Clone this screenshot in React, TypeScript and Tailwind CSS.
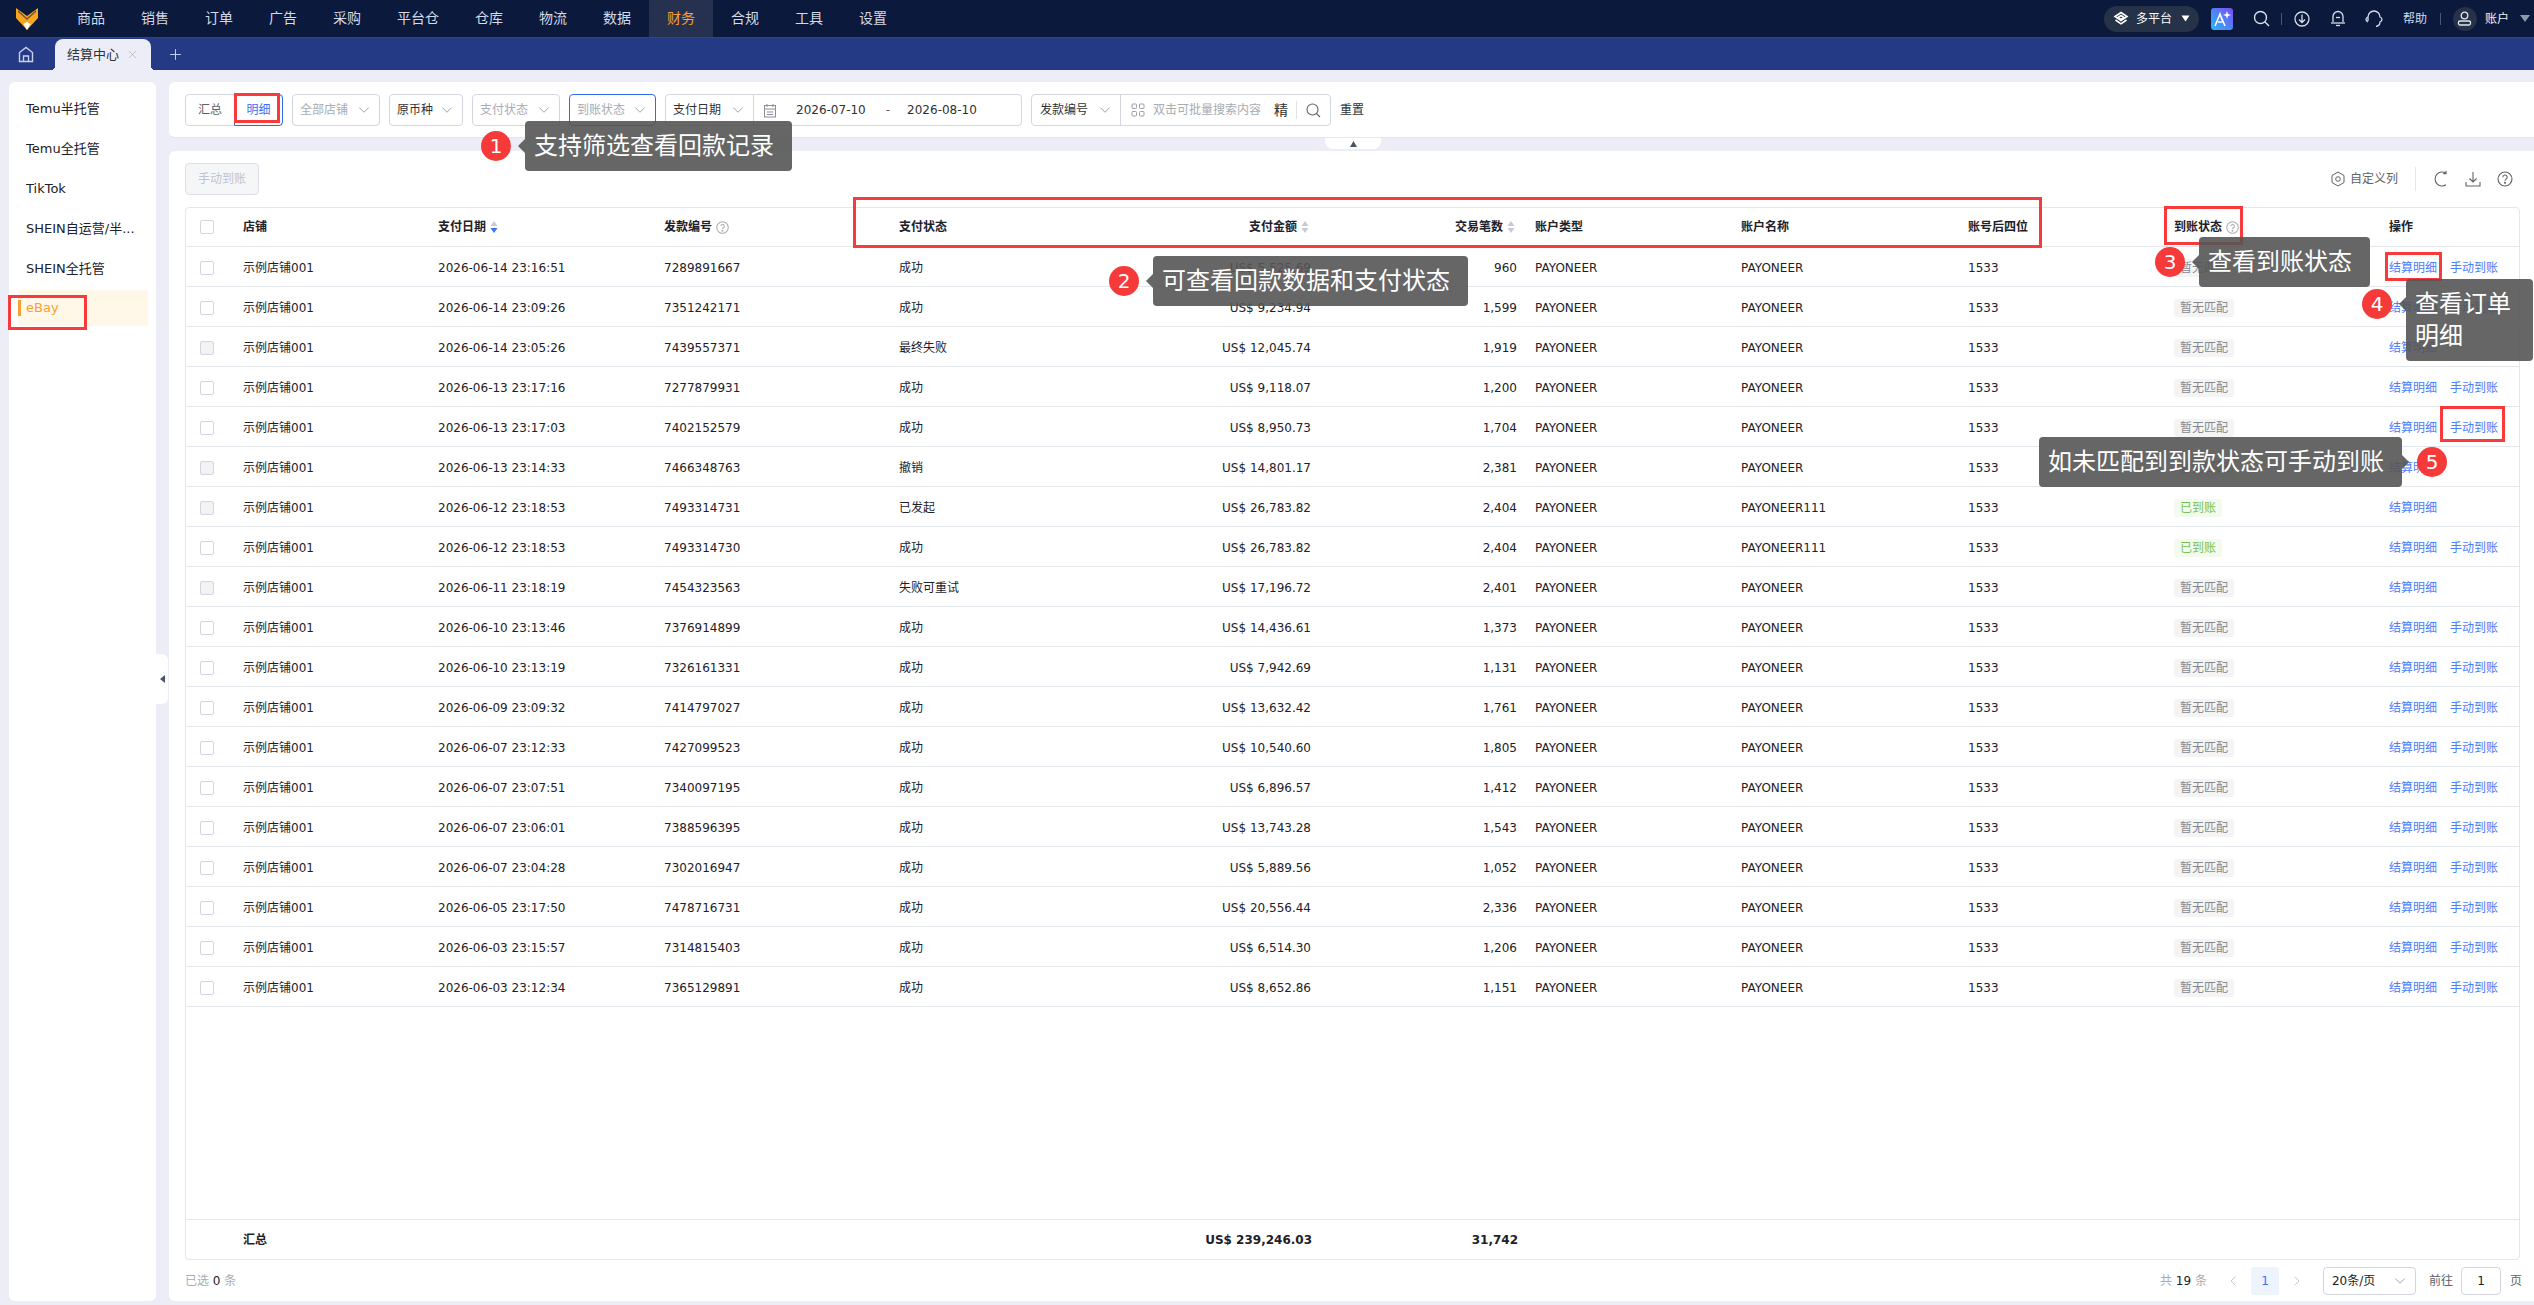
import React from "react";
import { ChevronDown, ChevronLeft, ChevronRight, X, Plus } from "lucide-react";

const NAV = ["商品", "销售", "订单", "广告", "采购", "平台仓", "仓库", "物流", "数据", "财务", "合规", "工具", "设置"];
const SIDE = ["Temu半托管", "Temu全托管", "TikTok", "SHEIN自运营/半...", "SHEIN全托管"];

const ROWS: [string, string, string, string, string, boolean, boolean][] = [
  ["2026-06-14 23:16:51", "7289891667", "成功", "5,525.69", "960", false, true],
  ["2026-06-14 23:09:26", "7351242171", "成功", "9,234.94", "1,599", false, true],
  ["2026-06-14 23:05:26", "7439557371", "最终失败", "12,045.74", "1,919", false, false],
  ["2026-06-13 23:17:16", "7277879931", "成功", "9,118.07", "1,200", false, true],
  ["2026-06-13 23:17:03", "7402152579", "成功", "8,950.73", "1,704", false, true],
  ["2026-06-13 23:14:33", "7466348763", "撤销", "14,801.17", "2,381", false, false],
  ["2026-06-12 23:18:53", "7493314731", "已发起", "26,783.82", "2,404", true, false],
  ["2026-06-12 23:18:53", "7493314730", "成功", "26,783.82", "2,404", true, true],
  ["2026-06-11 23:18:19", "7454323563", "失败可重试", "17,196.72", "2,401", false, false],
  ["2026-06-10 23:13:46", "7376914899", "成功", "14,436.61", "1,373", false, true],
  ["2026-06-10 23:13:19", "7326161331", "成功", "7,942.69", "1,131", false, true],
  ["2026-06-09 23:09:32", "7414797027", "成功", "13,632.42", "1,761", false, true],
  ["2026-06-07 23:12:33", "7427099523", "成功", "10,540.60", "1,805", false, true],
  ["2026-06-07 23:07:51", "7340097195", "成功", "6,896.57", "1,412", false, true],
  ["2026-06-07 23:06:01", "7388596395", "成功", "13,743.28", "1,543", false, true],
  ["2026-06-07 23:04:28", "7302016947", "成功", "5,889.56", "1,052", false, true],
  ["2026-06-05 23:17:50", "7478716731", "成功", "20,556.44", "2,336", false, true],
  ["2026-06-03 23:15:57", "7314815403", "成功", "6,514.30", "1,206", false, true],
  ["2026-06-03 23:12:34", "7365129891", "成功", "8,652.86", "1,151", false, true],
];

const GRID = "grid grid-cols-[45px_195px_226px_235px_213px_217px_206px_206px_227px_206px_215px_1fr] items-center";

function Sort({ active }: { active?: boolean }) {
  return (
    <svg width="8" height="14" viewBox="0 0 8 14" className="ml-[4px] shrink-0">
      <path d="M4 1 L7.5 6 H0.5 Z" fill="#c5cad6" />
      <path d="M4 13 L7.5 8 H0.5 Z" fill={active ? "#3b71f6" : "#c5cad6"} />
    </svg>
  );
}

function Help() {
  return (
    <svg width="13" height="13" viewBox="0 0 14 14" fill="none" stroke="#a8abb2" strokeWidth="1.1" className="ml-[4px] shrink-0">
      <circle cx="7" cy="7" r="6.2" />
      <path d="M5.2 5.5a1.9 1.9 0 1 1 2.8 1.7c-.7.4-1 .8-1 1.5" />
      <circle cx="7" cy="10.4" r=".5" fill="#a8abb2" />
    </svg>
  );
}

function Check({ disabled }: { disabled?: boolean }) {
  return (
    <div className="flex justify-center pr-[3px]">
      <div className={disabled ? "h-[14px] w-[14px] rounded-[2px] border border-[#d3d6de] bg-[#f2f3f5]" : "h-[14px] w-[14px] rounded-[2px] border border-[#d3d6de] bg-white"} />
    </div>
  );
}

function Select({ label, w, placeholder, active }: { label: string; w: string; placeholder?: boolean; active?: boolean }) {
  return (
    <div className={`${w} ${active ? "border-[#2f6bf0]" : "border-[#d3d6de]"} flex h-[32px] items-center justify-between rounded-[4px] border pl-[7px] pr-[6px]`}>
      <span className={placeholder ? "text-[#a8abb2]" : "text-[#303133]"}>{label}</span>
      <ChevronDown size={18} strokeWidth={1} color="#7f848e" />
    </div>
  );
}

function Callout({ n, box, circle, arrow, children }: { n: number; box: string; circle: string; arrow: string; children: React.ReactNode }) {
  return (
    <>
      <div className={`absolute z-20 flex items-center rounded-[4px] bg-[#555555]/90 px-[9px] text-[24px] leading-[32px] text-white ${box}`}>{children}</div>
      <div className={`absolute z-20 h-0 w-0 border-y-[7px] border-y-transparent ${arrow}`} />
      <div className={`absolute z-20 flex h-[30px] w-[30px] items-center justify-center rounded-full bg-[#f63a3a] text-[20px] text-white ${circle}`}>{n}</div>
    </>
  );
}

const RED = "absolute z-10 border-[3px] border-[#f83a3a] pointer-events-none";

export default function App() {
  return (
    <div className="relative flex h-[1305px] w-[2534px] flex-col overflow-hidden bg-[#ecedf6] text-[12px] text-[#1d2129] [font-family:'DejaVu_Sans','Noto_Sans_CJK_SC',sans-serif]">
      {/* top bar */}
      <header className="flex h-[37px] shrink-0 items-stretch bg-[#0b193c] text-[14px] text-[#d3d9e6]">
        <div className="flex w-[59px] items-center pl-[16px]">
          <svg width="22" height="22" viewBox="0 0 22 22">
            <path d="M0 0 L11 8 L22 0 V10 L11 22 L0 10 Z" fill="#f9a51f" />
            <path d="M2 2 L11 10 L20 2 L20 4 L11 12 L2 4 Z" fill="#0b193c" opacity=".55" />
            <path d="M7.5 16 L11 14 L14.5 16 L11 22 Z" fill="#ffffff" />
          </svg>
        </div>
        <nav className="flex items-stretch">
          {NAV.map((n) => (
            <div key={n} className={n === "财务" ? "flex items-center bg-[#263150] px-[18px] text-[#f5a032]" : "flex items-center px-[18px]"}>{n}</div>
          ))}
        </nav>
        <div className="ml-auto flex items-center text-[12px]">
          <div className="flex h-[26px] w-[95px] items-center rounded-full bg-[#263247] pl-[9px] text-white">
            <svg width="16" height="16" viewBox="0 0 16 16" fill="none" stroke="#fff" strokeWidth="1.6"><path d="M8 1.5 14 5.5 8 9.5 2 5.5Z" /><path d="M2.5 9 8 12.8 13.5 9" /><path d="M5 6.5 8 4.5 11 6.5 8 8.5Z" /></svg>
            <span className="ml-[7px]">多平台</span>
            <svg width="9" height="7" viewBox="0 0 9 7" className="ml-[9px]"><path d="M0.5 0.5H8.5L4.5 6.5Z" fill="#fff" /></svg>
          </div>
          <svg width="22" height="22" viewBox="0 0 22 22" className="ml-[12px]">
            <defs><linearGradient id="ai" x1="0" y1="1" x2="1" y2="0"><stop offset="0" stopColor="#29b6f6" /><stop offset="1" stopColor="#7a4df5" /></linearGradient></defs>
            <rect width="22" height="22" rx="3" fill="url(#ai)" />
            <path d="M4 18 L9 6 L11 12 M9 6 L14 18 M7 14 H12" stroke="#fff" strokeWidth="1.5" fill="none" />
            <path d="M16 3 L17 6 L20 7 L17 8 L16 11 L15 8 L12 7 L15 6 Z" fill="#fff" />
          </svg>
          <svg width="17" height="17" viewBox="0 0 17 17" fill="none" stroke="#d8dde8" strokeWidth="1.4" className="ml-[20px]"><circle cx="7.5" cy="7.5" r="6" /><path d="M12 12l4 4" /></svg>
          <div className="ml-[11px] h-[12px] w-px bg-[#4b5670]" />
          <svg width="16" height="16" viewBox="0 0 16 16" fill="none" stroke="#d8dde8" strokeWidth="1.3" className="ml-[12px]"><circle cx="8" cy="8" r="7" /><path d="M8 3.5V11M5 8.5 8 11.5 11 8.5" /></svg>
          <svg width="16" height="17" viewBox="0 0 16 17" fill="none" stroke="#d8dde8" strokeWidth="1.3" className="ml-[20px]"><path d="M3 12V6.5a5 5 0 0 1 10 0V12" /><path d="M1 13h14" /><path d="M6 15.5h4" /><path d="M6 7.5h4" /></svg>
          <svg width="18" height="18" viewBox="0 0 18 18" fill="none" stroke="#d8dde8" strokeWidth="1.3" className="ml-[19px]"><path d="M3 11V7a6 6 0 0 1 12 0c1.5.5 2 1.5 2 2.5s-.8 2-2 2.5c0 2-1.5 4-4 4.5" /><path d="M3 7c-1.3.5-2 1.5-2 2.5S1.700 11.500 3 12" /></svg>
          <span className="ml-[20px] text-[#d3d9e6]">帮助</span>
          <div className="ml-[13px] h-[12px] w-px bg-[#4b5670]" />
          <div className="ml-[12px] flex h-[24px] w-[24px] items-center justify-center rounded-full bg-[#263247]">
            <svg width="15" height="15" viewBox="0 0 15 15" fill="none" stroke="#e4e7ef" strokeWidth="1.3"><circle cx="7.5" cy="4.5" r="3.3" /><rect x="1.5" y="10" width="12" height="4" rx="1.5" /></svg>
          </div>
          <span className="ml-[8px] text-[#eef0f5]">账户</span>
          <svg width="10" height="7" viewBox="0 0 10 7" className="ml-[11px] mr-[4px]"><path d="M0 0H10L5 7Z" fill="#8f98ab" /></svg>
        </div>
      </header>

      {/* tab bar */}
      <div className="flex h-[33px] shrink-0 items-end border-t border-[#2b4390] bg-[#243a85]">
        <div className="flex h-[32px] w-[55px] items-center justify-center pr-[3px]">
          <svg width="16" height="17" viewBox="0 0 16 17" fill="none" stroke="#c9d2ea" strokeWidth="1.4"><path d="M1.5 15.5V6.5L8 1.5 14.5 6.5V15.5Z" /><path d="M5.5 15.5V10h5v5.5" /></svg>
        </div>
        <div className="relative flex h-[31px] w-[96px] items-center rounded-t-[8px] bg-[#ecedf6] pl-[12px] text-[13px] text-[#303133]">
          <span className="absolute -left-[4px] bottom-0 h-[4px] w-[4px] bg-[radial-gradient(circle_at_0_0,transparent_4px,#ecedf6_4px)]" />
          <span className="absolute -right-[4px] bottom-0 h-[4px] w-[4px] bg-[radial-gradient(circle_at_100%_0,transparent_4px,#ecedf6_4px)]" />
          <span>结算中心</span>
          <X size={13} strokeWidth={1.2} color="#a8abb2" className="ml-[7px]" />
        </div>
        <div className="flex h-[32px] w-[48px] items-center justify-center">
          <Plus size={17} strokeWidth={1.3} color="#d6dcf0" />
        </div>
      </div>

      {/* body */}
      <div className="flex min-h-0 flex-1 pb-[4px] pt-[12px]">
        <aside className="ml-[9px] w-[147px] shrink-0 rounded-[6px] bg-white pl-[9px] pr-[8px] pt-[7px] text-[13px]">
          {SIDE.map((s) => (
            <div key={s} className="flex h-[40px] items-center whitespace-nowrap pl-[8px]">{s}</div>
          ))}
          <div className="mt-[1px] flex h-[36px] items-center rounded-[4px] bg-[#fff7e8] text-[#f5a032]">
            <div className="h-[16px] w-[3px] bg-[#f5a032]" />
            <span className="ml-[5px]">eBay</span>
          </div>
        </aside>

        <main className="ml-[13px] flex min-w-0 flex-1 flex-col">
          {/* filters */}
          <section className="flex h-[56px] shrink-0 items-center gap-[9px] rounded-l-[6px] border-b border-[#e4e6ee] bg-white pl-[16px] pt-[1px]">
            <div className="flex h-[32px] w-[98px] rounded-[4px] border border-[#d3d6de]">
              <div className="flex w-[48px] items-center justify-center text-[#606266]">汇总</div>
              <div className="-my-px -mr-px flex flex-1 items-center justify-center rounded-r-[4px] border border-[#2f6bf0] text-[#3b71f6]">明细</div>
            </div>
            <Select w="w-[88px]" label="全部店铺" placeholder />
            <Select w="w-[74px]" label="原币种" />
            <Select w="w-[88px]" label="支付状态" placeholder />
            <Select w="w-[87px]" label="到账状态" placeholder active />
            <div className="flex h-[32px] w-[357px] items-center rounded-[4px] border border-[#d3d6de]">
              <div className="flex h-full w-[88px] items-center justify-between border-r border-[#d3d6de] pl-[7px] pr-[6px]">
                <span className="text-[#303133]">支付日期</span>
                <ChevronDown size={18} strokeWidth={1} color="#7f848e" />
              </div>
              <svg width="14" height="15" viewBox="0 0 14 15" fill="none" stroke="#8a8f99" className="ml-[9px]"><rect x="1.5" y="2.5" width="11" height="11.5" /><path d="M1.5 6h11M4 1v3M10 1v3M4 9h6M4 11.5h6" /></svg>
              <span className="ml-[19px] text-[#303133]">2026-07-10</span>
              <span className="ml-[20px] text-[#606266]">-</span>
              <span className="ml-[17px] text-[#303133]">2026-08-10</span>
            </div>
            <div className="flex h-[32px] w-[300px] items-center rounded-[4px] border border-[#d3d6de]">
              <div className="flex h-full w-[89px] items-center justify-between border-r border-[#d3d6de] pl-[8px] pr-[6px]">
                <span className="text-[#303133]">发款编号</span>
                <ChevronDown size={18} strokeWidth={1} color="#7f848e" />
              </div>
              <svg width="14" height="14" viewBox="0 0 14 14" fill="none" stroke="#9a9ea8" className="ml-[10px]"><rect x="1" y="1" width="4.5" height="4.5" rx="1" /><rect x="8.5" y="1" width="4.5" height="4.5" rx="1" /><rect x="1" y="8.5" width="4.5" height="4.5" rx="1" /><rect x="8.5" y="8.5" width="4.5" height="4.5" rx="1" /></svg>
              <span className="ml-[8px] whitespace-nowrap text-[#a8abb2]">双击可批量搜索内容</span>
              <span className="ml-[13px] text-[14px] text-[#303133]">精</span>
              <div className="ml-[8px] h-[18px] w-px bg-[#e1e3e9]" />
              <svg width="15" height="15" viewBox="0 0 15 15" fill="none" stroke="#606266" strokeWidth="1.1" className="ml-[9px]"><circle cx="6.5" cy="6.5" r="5.5" /><path d="M10.5 10.5l3.5 3.5" /></svg>
            </div>
            <span className="text-[#303133]">重置</span>
          </section>

          {/* table card */}
          <section className="mt-[13px] flex min-h-0 flex-1 flex-col rounded-l-[6px] bg-white pl-[16px] pr-[14px] pt-[12px]">
            <div className="flex h-[32px] shrink-0 items-center justify-between">
              <div className="flex h-[32px] w-[74px] items-center justify-center rounded-[4px] border border-[#dcdfe6] bg-[#f5f6f8] text-[#c0c4cc]">手动到账</div>
              <div className="flex items-center pr-[7px] text-[#606266]">
                <svg width="14" height="16" viewBox="0 0 14 16" fill="none" stroke="#606266"><path d="M7 1 13 4.5v7L7 15 1 11.5v-7Z" /><circle cx="7" cy="8" r="2.3" /></svg>
                <span className="ml-[5px]">自定义列</span>
                <div className="ml-[17px] h-[24px] w-px bg-[#e4e6ee]" />
                <svg width="16" height="18" viewBox="0 0 16 18" fill="none" stroke="#606266" strokeWidth="1.1" className="ml-[17px]"><path d="M13 3.2A7 7 0 1 0 13 14.8" /><path d="M13 .8v2.8h-2.800" /></svg>
                <svg width="16" height="16" viewBox="0 0 16 16" fill="none" stroke="#606266" strokeWidth="1.1" className="ml-[16px]"><path d="M8 1v9.5M4.5 7.5 8 11l3.5-3.5M1 11v4h14v-4" /></svg>
                <svg width="16" height="16" viewBox="0 0 16 16" fill="none" stroke="#606266" strokeWidth="1.1" className="ml-[16px]"><circle cx="8" cy="8" r="7" /><path d="M5.800 6.200a2.200 2.200 0 1 1 3.300 1.900c-.8.5-1.100.9-1.100 1.700" /><circle cx="8" cy="11.800" r=".5" fill="#606266" /></svg>
              </div>
            </div>

            <div className="mt-[12px] flex min-h-0 flex-1 flex-col rounded-[4px] border border-[#e4e6ee]">
              <div className={`${GRID} h-[39px] shrink-0 border-b border-[#e4e6ee] font-bold text-[#1d2129]`}>
                <Check />
                <div className="px-[12px]">店铺</div>
                <div className="flex items-center px-[12px]">支付日期<Sort active /></div>
                <div className="flex items-center px-[12px]">发款编号<Help /></div>
                <div className="px-[12px]">支付状态</div>
                <div className="flex items-center justify-end pl-[12px] pr-[8px]">支付金额<Sort /></div>
                <div className="flex items-center justify-end pl-[12px] pr-[8px]">交易笔数<Sort /></div>
                <div className="px-[12px]">账户类型</div>
                <div className="px-[12px]">账户名称</div>
                <div className="px-[12px]">账号后四位</div>
                <div className="flex items-center px-[12px]">到账状态<Help /></div>
                <div className="px-[12px]">操作</div>
              </div>
              {ROWS.map((r, i) => (
                <div key={i} className={`${GRID} h-[40px] shrink-0 border-b border-[#e4e6ee] pt-[2px]`}>
                  <Check disabled={!r[6]} />
                  <div className="px-[12px]">示例店铺001</div>
                  <div className="whitespace-nowrap px-[12px]">{r[0]}</div>
                  <div className="px-[12px]">{r[1]}</div>
                  <div className="px-[12px]">{r[2]}</div>
                  <div className="whitespace-nowrap pl-[12px] pr-[6px] text-right">US$ {r[3]}</div>
                  <div className="pl-[12px] pr-[6px] text-right">{r[4]}</div>
                  <div className="px-[12px]">PAYONEER</div>
                  <div className="px-[12px]">{r[5] ? "PAYONEER111" : "PAYONEER"}</div>
                  <div className="px-[12px]">1533</div>
                  <div className="flex items-center px-[12px]">
                    {r[5] ? (
                      <span className="inline-block h-[18px] rounded-[2px] bg-[#f2fbee] px-[6px] leading-[18px] text-[#79c257]">已到账</span>
                    ) : (
                      <span className="inline-block h-[18px] rounded-[2px] bg-[#f4f4f5] px-[6px] leading-[18px] text-[#86898f]">暂无匹配</span>
                    )}
                  </div>
                  <div className="flex gap-[13px] px-[12px] text-[#4a7dff]">
                    <span className="whitespace-nowrap">结算明细</span>
                    {r[6] && <span className="whitespace-nowrap">手动到账</span>}
                  </div>
                </div>
              ))}
              <div className="flex-1" />
              <div className={`${GRID} h-[40px] shrink-0 border-t border-[#e4e6ee] pt-[1px] font-bold`}>
                <div />
                <div className="px-[12px]">汇总</div>
                <div />
                <div />
                <div />
                <div className="whitespace-nowrap pl-[12px] pr-[5px] text-right">US$ 239,246.03</div>
                <div className="pl-[12px] pr-[5px] text-right">31,742</div>
              </div>
            </div>

            <div className="flex h-[41px] shrink-0 items-center justify-between">
              <div className="text-[#a8abb2]">已选 <span className="text-[#1d2129]">0</span> 条</div>
              <div className="-mr-[2px] flex items-center">
                <span className="text-[#a8abb2]">共 <span className="text-[#1d2129]">19</span> 条</span>
                <ChevronLeft size={16} strokeWidth={1.2} color="#b6bac3" className="ml-[18px]" />
                <div className="ml-[10px] flex h-[28px] w-[28px] items-center justify-center rounded-[3px] bg-[#eef4fe] text-[#3b71f6]">1</div>
                <ChevronRight size={16} strokeWidth={1.2} color="#b6bac3" className="ml-[10px]" />
                <div className="ml-[18px] flex h-[28px] w-[93px] items-center justify-between rounded-[4px] border border-[#d3d6de] pl-[8px] pr-[6px]">
                  <span className="text-[#1d2129]">20条/页</span>
                  <ChevronDown size={18} strokeWidth={1} color="#7f848e" />
                </div>
                <span className="ml-[13px] text-[#606266]">前往</span>
                <div className="ml-[8px] flex h-[28px] w-[40px] items-center justify-center rounded-[4px] border border-[#d3d6de]">1</div>
                <span className="ml-[9px] text-[#606266]">页</span>
              </div>
            </div>
          </section>
        </main>
      </div>

      {/* collapse handles */}
      <div className="absolute left-[1325px] top-[138px] flex h-[11px] w-[56px] items-center justify-center rounded-b-[8px] bg-white">
        <svg width="7" height="6" viewBox="0 0 7 6"><path d="M3.5 0 7 6H0Z" fill="#4b5563" /></svg>
      </div>
      <div className="absolute left-[156px] top-[654px] flex h-[50px] w-[12px] items-center justify-center rounded-r-[6px] bg-white">
        <svg width="5" height="8" viewBox="0 0 5 8"><path d="M5 0V8L0 4Z" fill="#4b5563" /></svg>
      </div>

      {/* red highlight boxes */}
      <div className={`${RED} left-[234px] top-[93px] h-[30px] w-[46px]`} />
      <div className={`${RED} left-[8px] top-[295px] h-[35px] w-[79px]`} />
      <div className={`${RED} left-[853px] top-[197px] h-[51px] w-[1189px]`} />
      <div className={`${RED} left-[2164px] top-[206px] h-[39px] w-[79px]`} />
      <div className={`${RED} left-[2385px] top-[252px] h-[29px] w-[57px]`} />
      <div className={`${RED} left-[2440px] top-[406px] h-[36px] w-[65px]`} />

      {/* callouts */}
      <Callout n={1} box="left-[525px] top-[121px] h-[50px] w-[267px]" circle="left-[481px] top-[131px]" arrow="left-[518px] top-[139px] border-r-[7px] border-r-[#555555]/90">支持筛选查看回款记录</Callout>
      <Callout n={2} box="left-[1153px] top-[256px] h-[50px] w-[315px]" circle="left-[1109px] top-[266px]" arrow="left-[1146px] top-[274px] border-r-[7px] border-r-[#555555]/90">可查看回款数据和支付状态</Callout>
      <Callout n={3} box="left-[2199px] top-[237px] h-[50px] w-[171px]" circle="left-[2155px] top-[247px]" arrow="left-[2192px] top-[255px] border-r-[7px] border-r-[#555555]/90">查看到账状态</Callout>
      <Callout n={4} box="left-[2406px] top-[279px] h-[82px] w-[127px]" circle="left-[2362px] top-[289px]" arrow="left-[2399px] top-[297px] border-r-[7px] border-r-[#555555]/90">查看订单 明细</Callout>
      <Callout n={5} box="left-[2039px] top-[437px] h-[50px] w-[363px]" circle="left-[2417px] top-[447px]" arrow="left-[2402px] top-[455px] border-l-[7px] border-l-[#555555]/90">如未匹配到到款状态可手动到账</Callout>
    </div>
  );
}
